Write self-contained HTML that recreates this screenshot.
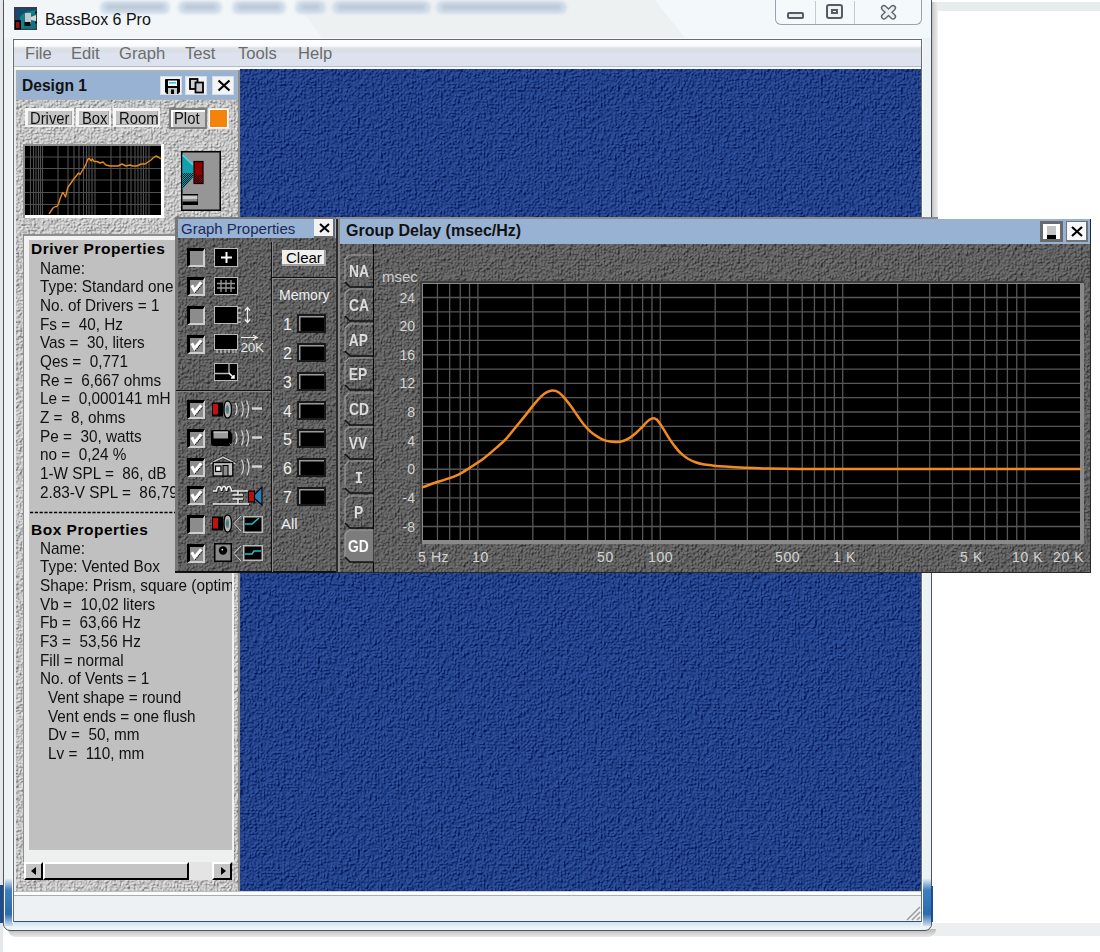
<!DOCTYPE html>
<html><head><meta charset="utf-8">
<style>
*{margin:0;padding:0;box-sizing:border-box}
html,body{width:1100px;height:952px;overflow:hidden;background:#fff;font-family:"Liberation Sans",sans-serif}
.a{position:absolute}
.t{position:absolute;white-space:nowrap;line-height:1}
svg{display:block}
</style></head><body>
<svg width="0" height="0" style="position:absolute">
<defs>
<filter id="nb" x="0" y="0" width="100%" height="100%" color-interpolation-filters="sRGB">
<feTurbulence type="turbulence" baseFrequency="0.35" numOctaves="2" seed="4" result="t"/>
<feColorMatrix in="t" type="matrix" values="0 0 0 0 0  0 0 0 0 0  0 0 0 0 0  1 0 0 0 0" result="a"/>
<feDiffuseLighting in="a" surfaceScale="2.5" diffuseConstant="1" lighting-color="#fff" result="l"><feDistantLight azimuth="225" elevation="50"/></feDiffuseLighting>
<feColorMatrix in="l" type="matrix" values="0.2 0 0 0 -0.01  0 0.26 0 0 0.065  0 0 0.32 0 0.31  0 0 0 0 1"/>
</filter>
<filter id="nl" x="0" y="0" width="100%" height="100%" color-interpolation-filters="sRGB">
<feTurbulence type="turbulence" baseFrequency="0.35" numOctaves="2" seed="7" result="t"/>
<feColorMatrix in="t" type="matrix" values="0 0 0 0 0  0 0 0 0 0  0 0 0 0 0  1 0 0 0 0" result="a"/>
<feDiffuseLighting in="a" surfaceScale="2.5" diffuseConstant="1" lighting-color="#fff" result="l"><feDistantLight azimuth="225" elevation="50"/></feDiffuseLighting>
<feColorMatrix in="l" type="matrix" values="0.45 0 0 0 0.44  0.45 0 0 0 0.44  0.45 0 0 0 0.44  0 0 0 0 1"/>
</filter>
<filter id="nd" x="0" y="0" width="100%" height="100%" color-interpolation-filters="sRGB">
<feTurbulence type="turbulence" baseFrequency="0.35" numOctaves="2" seed="9" result="t"/>
<feColorMatrix in="t" type="matrix" values="0 0 0 0 0  0 0 0 0 0  0 0 0 0 0  1 0 0 0 0" result="a"/>
<feDiffuseLighting in="a" surfaceScale="2.5" diffuseConstant="1" lighting-color="#fff" result="l"><feDistantLight azimuth="225" elevation="50"/></feDiffuseLighting>
<feColorMatrix in="l" type="matrix" values="0.3 0 0 0 0.155  0.3 0 0 0 0.155  0.3 0 0 0 0.155  0 0 0 0 1"/>
</filter>
</defs></svg>
<div class="a" style="left:0;top:0;width:1100px;height:952px;overflow:hidden">

<div class="a" style="left:936px;top:2px;width:164px;height:9px;background:#e9eced"></div>
<div class="a" style="left:930px;top:923px;width:170px;height:13px;background:#eceeef"></div>
<div class="a" style="left:0px;top:0px;width:3px;height:952px;background:#e4e8ea"></div>
<div class="a" style="left:930px;top:2px;width:8px;height:216px;background:linear-gradient(90deg,#9a9a9a,#d0d0d0 40%,#eeeeee)"></div>
<div class="a" style="left:8px;top:929px;width:928px;height:8px;border-radius:0 0 8px 8px;background:linear-gradient(#b8b8b8,#e8e8e8)"></div>
<div class="a" style="left:3px;top:-6px;width:929px;height:937px;border:1px solid #4e5458;border-radius:7px;background:#edf2f4"></div>
<div class="a" style="left:4px;top:0px;width:927px;height:38px;background:#eef1f2"></div>
<div class="a" style="left:4px;top:0px;width:320px;height:38px;background:#f2f6f8;clip-path:polygon(0 0,290px 0,318px 38px,0 38px)"></div>
<div class="a" style="left:655px;top:0px;width:276px;height:38px;background:#f3f8fa;clip-path:polygon(0 0,276px 0,276px 38px,30px 38px)"></div>
<div class="a" style="left:100px;top:0.5px;width:70px;height:13px;border-radius:6px;background:#d2dfec;filter:blur(1.8px)"></div>
<div class="a" style="left:105px;top:4px;width:60px;height:6px;border-radius:3px;background:#a8b4c2;filter:blur(2.2px);opacity:0.55"></div>
<div class="a" style="left:178px;top:0.5px;width:44px;height:13px;border-radius:6px;background:#d2dfec;filter:blur(1.8px)"></div>
<div class="a" style="left:183px;top:4px;width:34px;height:6px;border-radius:3px;background:#a8b4c2;filter:blur(2.2px);opacity:0.55"></div>
<div class="a" style="left:232px;top:0.5px;width:54px;height:13px;border-radius:6px;background:#d2dfec;filter:blur(1.8px)"></div>
<div class="a" style="left:237px;top:4px;width:44px;height:6px;border-radius:3px;background:#a8b4c2;filter:blur(2.2px);opacity:0.55"></div>
<div class="a" style="left:295px;top:0.5px;width:31px;height:13px;border-radius:6px;background:#d2dfec;filter:blur(1.8px)"></div>
<div class="a" style="left:300px;top:4px;width:21px;height:6px;border-radius:3px;background:#a8b4c2;filter:blur(2.2px);opacity:0.55"></div>
<div class="a" style="left:332px;top:0.5px;width:99px;height:13px;border-radius:6px;background:#d2dfec;filter:blur(1.8px)"></div>
<div class="a" style="left:337px;top:4px;width:89px;height:6px;border-radius:3px;background:#a8b4c2;filter:blur(2.2px);opacity:0.55"></div>
<div class="a" style="left:436px;top:0.5px;width:131px;height:13px;border-radius:6px;background:#d2dfec;filter:blur(1.8px)"></div>
<div class="a" style="left:441px;top:4px;width:121px;height:6px;border-radius:3px;background:#a8b4c2;filter:blur(2.2px);opacity:0.55"></div>
<div class="a" style="left:5px;top:878px;width:8px;height:48px;background:linear-gradient(#eef5f8,#3f7fc0 25%,#2a6ab0 75%,#cfe0ef)"></div>
<div class="a" style="left:923px;top:878px;width:8px;height:48px;background:linear-gradient(#eef5f8,#3f7fc0 25%,#2a6ab0 75%,#cfe0ef)"></div>
<div class="a" style="left:0px;top:885px;width:3px;height:38px;background:#1d4d90"></div>
<div class="a" style="left:931px;top:886px;width:2px;height:36px;background:#1d4d90"></div>
<div class="a" style="left:14px;top:922px;width:907px;height:8px;background:linear-gradient(#cfe2f0,#e8f2f8 60%,#f4f8fa)"></div>
<svg class="a" style="left:14px;top:7px" width="23" height="23">
<rect x="0" y="0" width="23" height="23" fill="#3c3c40"/>
<rect x="1.5" y="1.5" width="20" height="20" fill="#124a72"/>
<path d="M6 21.5 V10 Q8 5 21.5 3 V21.5 Z" fill="#11828c"/>
<path d="M10 21.5 V12 Q13 8 21.5 6 V21.5 Z" fill="#0e7580"/>
<rect x="11" y="6" width="6" height="11" fill="#c4c8c8"/>
<path d="M17 10 L22 8 V14 L17 13 Z" fill="#d4d8d8"/>
<rect x="10.5" y="15" width="6" height="4" fill="#050505"/>
<circle cx="22" cy="5.5" r="1" fill="#000"/><circle cx="22" cy="15.5" r="1" fill="#000"/>
<rect x="1" y="13" width="6" height="9.5" fill="#000"/>
<rect x="2" y="15" width="3.5" height="6" fill="#8e1212"/>
</svg>
<div class="t" style="left:45px;top:11.5px;font-size:16px;color:#111;">BassBox 6 Pro</div>
<div class="a" style="left:775px;top:0px;width:147px;height:25px;border:1px solid #98a3ad;border-top:none;border-radius:0 0 6px 6px;background:#f4f9fb"></div>
<div class="a" style="left:815px;top:1px;width:1px;height:23px;background:#c4ccd3"></div>
<div class="a" style="left:854px;top:1px;width:1px;height:23px;background:#c4ccd3"></div>
<div class="a" style="left:787px;top:12px;width:17px;height:7px;border:2px solid #555c63;border-radius:2px;background:#e8ecef"></div>
<div class="a" style="left:826px;top:4px;width:17px;height:15px;border:2px solid #555c63;border-radius:3px;background:#f0f3f5"></div>
<div class="a" style="left:831px;top:9px;width:7px;height:5px;border:2px solid #555c63;background:#fff"></div>
<svg class="a" style="left:878px;top:1.5px" width="21" height="20"><path d="M6 6 L15 14.5 M15 6 L6 14.5" stroke="#5d656c" stroke-width="6.2" stroke-linecap="round"/><path d="M6 6 L15 14.5 M15 6 L6 14.5" stroke="#eceff1" stroke-width="3.4" stroke-linecap="round"/></svg>
<div class="a" style="left:12px;top:38px;width:911px;height:885px;border:1px solid #fafcfc;border-bottom:none;background:transparent"></div>
<div class="a" style="left:13px;top:39px;width:909px;height:883px;border:1px solid #676d72;background:#dce3ee"></div>
<div class="a" style="left:14px;top:40px;width:907px;height:27px;background:linear-gradient(#fdfefe 0,#f9fbfc 6px,#dde2e8 8px,#d9dee5 12px,#dce3ee 13px,#dce3ee 26px)"></div>
<div class="a" style="left:14px;top:66px;width:907px;height:1px;background:#b4bcc6"></div>
<div class="a" style="left:14px;top:67px;width:907px;height:2px;background:#f6f8fb"></div>
<div class="t" style="left:25px;top:46.3px;font-size:16.6px;color:#6c6c6c;">File</div>
<div class="t" style="left:71px;top:46.3px;font-size:16.6px;color:#6c6c6c;">Edit</div>
<div class="t" style="left:119px;top:46.3px;font-size:16.6px;color:#6c6c6c;">Graph</div>
<div class="t" style="left:185px;top:46.3px;font-size:16.6px;color:#6c6c6c;">Test</div>
<div class="t" style="left:238px;top:46.3px;font-size:16.6px;color:#6c6c6c;">Tools</div>
<div class="t" style="left:298px;top:46.3px;font-size:16.6px;color:#6c6c6c;">Help</div>
<svg class="a" style="left:240px;top:69px" width="681" height="823"><rect width="681" height="823" filter="url(#nb)"/></svg>
<div class="a" style="left:14px;top:891px;width:907px;height:31px;background:#eef1f3"></div>
<div class="a" style="left:14px;top:891px;width:907px;height:1px;background:#c9cdd0"></div>
<div class="a" style="left:14px;top:892px;width:907px;height:3px;background:#fbfcfc"></div>
<div class="a" style="left:14px;top:895px;width:907px;height:1px;background:#a9adb0"></div>
<div class="a" style="left:14px;top:921px;width:907px;height:1px;background:#3d4f60"></div>
<svg class="a" style="left:902px;top:902px" width="20" height="19"><path d="M18 5 L5 18 M18 10 L10 18 M18 15 L15 18" stroke="#9a9fa3" stroke-width="1.6"/></svg>
<div class="a" style="left:14px;top:69px;width:226px;height:823px;background:#bdbdbd"></div>
<svg class="a" style="left:16px;top:69px" width="223" height="822"><rect width="223" height="822" filter="url(#nl)"/></svg>
<div class="a" style="left:14px;top:69px;width:2px;height:822px;background:#e8ecee"></div>
<div class="a" style="left:238px;top:69px;width:2px;height:822px;background:#8c8c8c"></div>
<div class="a" style="left:14px;top:67px;width:226px;height:3px;background:#f4f6f8"></div>
<div class="a" style="left:16px;top:70px;width:222px;height:30px;background:#a9b3bd"></div>
<div class="a" style="left:18px;top:72px;width:219px;height:27px;background:#98b2d3"></div>
<div class="t" style="left:22px;top:77.5px;font-size:15.6px;color:#111;font-weight:bold">Design 1</div>
<div class="a" style="left:160px;top:76px;width:22px;height:19px;background:#f2f3f4;border:1px solid #d8dde2"></div>
<div class="a" style="left:185px;top:76px;width:22px;height:19px;background:#f2f3f4;border:1px solid #d8dde2"></div>
<div class="a" style="left:212px;top:76px;width:22px;height:19px;background:#f2f3f4;border:1px solid #d8dde2"></div>
<svg class="a" style="left:165px;top:79px" width="15" height="15"><path d="M0 1 Q0 0 1 0 H14 Q15 0 15 1 V13 L13 15 H2 L0 13 Z" fill="#000"/><rect x="3" y="1.5" width="9" height="5.5" fill="#f4f4f4"/><rect x="4" y="3" width="7" height="1.6" fill="#30c8d0"/><rect x="3" y="9" width="9" height="6" fill="#c8c8c8"/><rect x="6" y="10.5" width="3" height="4.5" fill="#000"/></svg>
<svg class="a" style="left:189px;top:78px" width="16" height="16"><rect x="1" y="1" width="7.5" height="10" fill="#d0d0d0" stroke="#000" stroke-width="1.8"/><rect x="6.5" y="4.5" width="7.5" height="10" fill="#c8c8c8" stroke="#000" stroke-width="1.8"/></svg>
<svg class="a" style="left:217px;top:79px" width="14" height="13"><path d="M1.5 1.5 L12.5 11.5 M12.5 1.5 L1.5 11.5" stroke="#000" stroke-width="2.2"/></svg>
<div class="a" style="left:25px;top:108px;width:49px;height:19px;background:#c4c4c4;border-top:3px solid #f6f6f6;border-left:3px solid #f6f6f6;border-right:2px solid #f0f0f0;border-bottom:2px solid #f0f0f0;box-shadow:inset -1px -1px 0 #a4a4a4"></div>
<div class="t" style="left:30px;top:110.3px;font-size:17px;color:#111;transform:scaleX(0.87);transform-origin:0 0">Driver</div>
<div class="a" style="left:76px;top:108px;width:35px;height:19px;background:#c4c4c4;border-top:3px solid #f6f6f6;border-left:3px solid #f6f6f6;border-right:2px solid #f0f0f0;border-bottom:2px solid #f0f0f0;box-shadow:inset -1px -1px 0 #a4a4a4"></div>
<div class="t" style="left:82px;top:110.3px;font-size:17px;color:#111;transform:scaleX(0.87);transform-origin:0 0">Box</div>
<div class="a" style="left:113px;top:108px;width:47px;height:19px;background:#c4c4c4;border-top:3px solid #f6f6f6;border-left:3px solid #f6f6f6;border-right:2px solid #f0f0f0;border-bottom:2px solid #f0f0f0;box-shadow:inset -1px -1px 0 #a4a4a4"></div>
<div class="t" style="left:118.5px;top:110.3px;font-size:17px;color:#111;transform:scaleX(0.87);transform-origin:0 0">Room</div>
<div class="a" style="left:169px;top:108px;width:38px;height:21px;background:#c4c4c4;border:2px solid #7d7d7d;border-top-color:#7d7d7d;border-left-color:#7d7d7d;box-shadow:inset 2px 2px 0 #fff"></div>
<div class="t" style="left:174px;top:110.3px;font-size:17px;color:#111;transform:scaleX(0.87);transform-origin:0 0">Plot</div>
<div class="a" style="left:208px;top:108px;width:21px;height:21px;background:#fff;border:1px solid #e8e8e8"></div>
<div class="a" style="left:210px;top:110px;width:17px;height:17px;background:#f4830c"></div>
<svg class="a" style="left:23px;top:144px" width="141" height="74">
<rect x="0" y="0" width="141" height="74" fill="#8e8e8e"/>
<rect x="2" y="71" width="139" height="3" fill="#fff"/><rect x="138" y="0" width="3" height="74" fill="#fff"/>
<rect x="2" y="2" width="136" height="69" fill="#000"/>
<line x1="7.5" y1="2" x2="7.5" y2="71" stroke="#505050" stroke-width="1.1"/>
<line x1="10.5" y1="2" x2="10.5" y2="71" stroke="#505050" stroke-width="1.1"/>
<line x1="13" y1="2" x2="13" y2="71" stroke="#505050" stroke-width="1.1"/>
<line x1="15.5" y1="2" x2="15.5" y2="71" stroke="#505050" stroke-width="1.1"/>
<line x1="17.5" y1="2" x2="17.5" y2="71" stroke="#505050" stroke-width="1.1"/>
<line x1="19.5" y1="2" x2="19.5" y2="71" stroke="#505050" stroke-width="1.1"/>
<line x1="35" y1="2" x2="35" y2="71" stroke="#505050" stroke-width="1.1"/>
<line x1="45" y1="2" x2="45" y2="71" stroke="#505050" stroke-width="1.1"/>
<line x1="51" y1="2" x2="51" y2="71" stroke="#505050" stroke-width="1.1"/>
<line x1="56" y1="2" x2="56" y2="71" stroke="#505050" stroke-width="1.1"/>
<line x1="60.5" y1="2" x2="60.5" y2="71" stroke="#505050" stroke-width="1.1"/>
<line x1="63.5" y1="2" x2="63.5" y2="71" stroke="#505050" stroke-width="1.1"/>
<line x1="66" y1="2" x2="66" y2="71" stroke="#505050" stroke-width="1.1"/>
<line x1="69" y1="2" x2="69" y2="71" stroke="#505050" stroke-width="1.1"/>
<line x1="72" y1="2" x2="72" y2="71" stroke="#505050" stroke-width="1.1"/>
<line x1="88" y1="2" x2="88" y2="71" stroke="#505050" stroke-width="1.1"/>
<line x1="97" y1="2" x2="97" y2="71" stroke="#505050" stroke-width="1.1"/>
<line x1="104" y1="2" x2="104" y2="71" stroke="#505050" stroke-width="1.1"/>
<line x1="108" y1="2" x2="108" y2="71" stroke="#505050" stroke-width="1.1"/>
<line x1="112" y1="2" x2="112" y2="71" stroke="#505050" stroke-width="1.1"/>
<line x1="115" y1="2" x2="115" y2="71" stroke="#505050" stroke-width="1.1"/>
<line x1="118" y1="2" x2="118" y2="71" stroke="#505050" stroke-width="1.1"/>
<line x1="120.5" y1="2" x2="120.5" y2="71" stroke="#505050" stroke-width="1.1"/>
<line x1="123" y1="2" x2="123" y2="71" stroke="#505050" stroke-width="1.1"/>
<line x1="126" y1="2" x2="126" y2="71" stroke="#505050" stroke-width="1.1"/>
<line x1="2" y1="13" x2="138" y2="13" stroke="#505050" stroke-width="1.1"/>
<line x1="2" y1="24.5" x2="138" y2="24.5" stroke="#505050" stroke-width="1.1"/>
<line x1="2" y1="36" x2="138" y2="36" stroke="#505050" stroke-width="1.1"/>
<line x1="2" y1="48.5" x2="138" y2="48.5" stroke="#505050" stroke-width="1.1"/>
<line x1="2" y1="60.5" x2="138" y2="60.5" stroke="#505050" stroke-width="1.1"/>
<path d="M26,70 L28,67 L30,64 L32.5,62.5 L34,62.5 L35.5,60 L37,55 L39,50 L40,48.5 L41.5,51 L42.5,53 L43.5,49 L45,43 L48,39 L50,36 L52,33.5 L54,31 L55.5,29 L57,30.5 L58.5,28 L61,24 L63,20 L65,15 L66.5,14.5 L68,17 L69.5,15 L71,17.5 L74,17.5 L77,19 L80,18 L83,21 L87,22 L91,22 L95,22 L99,20 L103,22 L107,21 L110,22 L114,22 L118,20 L122,20 L125,18 L128,16 L130,14 L133,12 L135,13 L138,15" fill="none" stroke="#e88a22" stroke-width="1.4" stroke-linejoin="round"/>
</svg>
<svg class="a" style="left:181px;top:151px" width="40" height="60">
<defs><pattern id="dith" width="2" height="2" patternUnits="userSpaceOnUse"><rect width="2" height="2" fill="#0b1a20"/><rect width="1" height="1" fill="#1590a0"/><rect x="1" y="1" width="1" height="1" fill="#1590a0"/></pattern>
<pattern id="dithr" width="2" height="2" patternUnits="userSpaceOnUse"><rect width="2" height="2" fill="#200404"/><rect width="1" height="1" fill="#8a0000"/><rect x="1" y="1" width="1" height="1" fill="#8a0000"/></pattern></defs>
<rect x="0.75" y="0.75" width="38.5" height="58.5" fill="#969696" stroke="#000" stroke-width="1.5"/>
<path d="M1.5 4 L12 14 L12 26 L1.5 38 Z" fill="#12a0ac"/>
<path d="M1.5 22 L12 22 L12 26 L1.5 38 Z" fill="url(#dith)"/>
<path d="M1.5 4 L12 14" stroke="#40e0f0" stroke-width="1.3"/>
<rect x="13" y="10.5" width="9" height="22" fill="#8c0000" stroke="#000" stroke-width="1.2"/>
<rect x="13.6" y="24" width="7.8" height="8" fill="url(#dithr)"/>
<rect x="1.5" y="43" width="15.5" height="11" fill="#000"/>
<rect x="1.5" y="44.5" width="15" height="3.5" fill="#c8c8c8"/>
<rect x="1.5" y="48" width="15" height="2.5" fill="#8a8a8a"/>
</svg>
<div class="a" style="left:23px;top:234px;width:211px;height:628px;background:#8e8e8e"></div>
<div class="a" style="left:24px;top:236px;width:210px;height:626px;background:#f2f2f2"></div>
<div class="a" style="left:29px;top:240px;width:203px;height:610px;background:#c0c0c0"></div>
<div class="a" style="left:24px;top:850px;width:208px;height:12px;background:#eef0f0"></div>
<div class="a" style="left:29px;top:240px;width:203px;height:610px;overflow:hidden">
<div class="t" style="left:2px;top:0.8px;font-size:15.5px;font-weight:bold;letter-spacing:0.5px;color:#000">Driver Properties</div>
<div class="t" style="left:10.5px;top:19.6px;font-size:17px;transform:scaleX(0.9);transform-origin:0 0;color:#111">Name:</div>
<div class="t" style="left:10.5px;top:38.3px;font-size:17px;transform:scaleX(0.9);transform-origin:0 0;color:#111">Type: Standard one</div>
<div class="t" style="left:10.5px;top:56.9px;font-size:17px;transform:scaleX(0.9);transform-origin:0 0;color:#111">No. of Drivers = 1</div>
<div class="t" style="left:10.5px;top:75.6px;font-size:17px;transform:scaleX(0.9);transform-origin:0 0;color:#111">Fs =&nbsp; 40, Hz</div>
<div class="t" style="left:10.5px;top:94.3px;font-size:17px;transform:scaleX(0.9);transform-origin:0 0;color:#111">Vas =&nbsp; 30, liters</div>
<div class="t" style="left:10.5px;top:113.0px;font-size:17px;transform:scaleX(0.9);transform-origin:0 0;color:#111">Qes =&nbsp; 0,771</div>
<div class="t" style="left:10.5px;top:131.6px;font-size:17px;transform:scaleX(0.9);transform-origin:0 0;color:#111">Re =&nbsp; 6,667 ohms</div>
<div class="t" style="left:10.5px;top:150.3px;font-size:17px;transform:scaleX(0.9);transform-origin:0 0;color:#111">Le =&nbsp; 0,000141 mH</div>
<div class="t" style="left:10.5px;top:169.0px;font-size:17px;transform:scaleX(0.9);transform-origin:0 0;color:#111">Z =&nbsp; 8, ohms</div>
<div class="t" style="left:10.5px;top:187.6px;font-size:17px;transform:scaleX(0.9);transform-origin:0 0;color:#111">Pe =&nbsp; 30, watts</div>
<div class="t" style="left:10.5px;top:206.3px;font-size:17px;transform:scaleX(0.9);transform-origin:0 0;color:#111">no =&nbsp; 0,24 %</div>
<div class="t" style="left:10.5px;top:225.0px;font-size:17px;transform:scaleX(0.9);transform-origin:0 0;color:#111">1-W SPL =&nbsp; 86, dB</div>
<div class="t" style="left:10.5px;top:243.6px;font-size:17px;transform:scaleX(0.9);transform-origin:0 0;color:#111">2.83-V SPL =&nbsp; 86,79</div>
<div class="t" style="left:2px;top:281.5px;font-size:15.5px;font-weight:bold;letter-spacing:0.5px;color:#000">Box Properties</div>
<div class="t" style="left:10.5px;top:299.6px;font-size:17px;transform:scaleX(0.9);transform-origin:0 0;color:#111">Name:</div>
<div class="t" style="left:10.5px;top:318.3px;font-size:17px;transform:scaleX(0.9);transform-origin:0 0;color:#111">Type: Vented Box</div>
<div class="t" style="left:10.5px;top:336.9px;font-size:17px;transform:scaleX(0.9);transform-origin:0 0;color:#111">Shape: Prism, square (optimu</div>
<div class="t" style="left:10.5px;top:355.6px;font-size:17px;transform:scaleX(0.9);transform-origin:0 0;color:#111">Vb =&nbsp; 10,02 liters</div>
<div class="t" style="left:10.5px;top:374.3px;font-size:17px;transform:scaleX(0.9);transform-origin:0 0;color:#111">Fb =&nbsp; 63,66 Hz</div>
<div class="t" style="left:10.5px;top:393.0px;font-size:17px;transform:scaleX(0.9);transform-origin:0 0;color:#111">F3 =&nbsp; 53,56 Hz</div>
<div class="t" style="left:10.5px;top:411.6px;font-size:17px;transform:scaleX(0.9);transform-origin:0 0;color:#111">Fill = normal</div>
<div class="t" style="left:10.5px;top:430.3px;font-size:17px;transform:scaleX(0.9);transform-origin:0 0;color:#111">No. of Vents = 1</div>
<div class="t" style="left:18.5px;top:449.0px;font-size:17px;transform:scaleX(0.9);transform-origin:0 0;color:#111">Vent shape = round</div>
<div class="t" style="left:18.5px;top:467.6px;font-size:17px;transform:scaleX(0.9);transform-origin:0 0;color:#111">Vent ends = one flush</div>
<div class="t" style="left:18.5px;top:486.3px;font-size:17px;transform:scaleX(0.9);transform-origin:0 0;color:#111">Dv =&nbsp; 50, mm</div>
<div class="t" style="left:18.5px;top:505.0px;font-size:17px;transform:scaleX(0.9);transform-origin:0 0;color:#111">Lv =&nbsp; 110, mm</div>
</div>
<svg class="a" style="left:29px;top:511px" width="203" height="3"><line x1="1" y1="1.5" x2="203" y2="1.5" stroke="#000" stroke-width="1.4" stroke-dasharray="3.2 1.6"/></svg>
<div class="a" style="left:24px;top:862px;width:208px;height:18px;background:#e4e4e4"></div>
<div class="a" style="left:24px;top:862px;width:19px;height:18px;background:#c4c4c4;border-top:2px solid #fff;border-left:2px solid #fff;border-right:2px solid #000;border-bottom:2px solid #000"></div>
<svg class="a" style="left:30px;top:866px" width="8" height="10"><path d="M1 5 L6 1 L6 9 Z" fill="#000"/></svg>
<div class="a" style="left:43px;top:862px;width:146px;height:18px;background:#c4c4c4;border-top:2px solid #fff;border-left:2px solid #fff;border-right:2px solid #000;border-bottom:2px solid #000"></div>
<div class="a" style="left:212px;top:862px;width:20px;height:18px;background:#c4c4c4;border-top:2px solid #fff;border-left:2px solid #fff;border-right:2px solid #000;border-bottom:2px solid #000"></div>
<svg class="a" style="left:219px;top:866px" width="8" height="10"><path d="M2 1 L7 5 L2 9 Z" fill="#000"/></svg>
<div class="a" style="left:175px;top:217px;width:162px;height:356px;background:#777"></div>
<svg class="a" style="left:178px;top:238px" width="158" height="334"><rect width="158" height="334" filter="url(#nd)"/></svg>
<div class="a" style="left:178px;top:219px;width:158px;height:19px;background:#98b2d3"></div>
<div class="t" style="left:181px;top:221px;font-size:15px;color:#1a2a55;">Graph Properties</div>
<div class="a" style="left:314px;top:219px;width:21px;height:19px;background:#f2f2f2;border-right:2px solid #6a6a6a;border-bottom:2px solid #6a6a6a"></div>
<svg class="a" style="left:318px;top:222px" width="13" height="12"><path d="M2 2 L11 10 M11 2 L2 10" stroke="#000" stroke-width="2"/></svg>
<div class="a" style="left:336px;top:217px;width:1px;height:356px;background:#111"></div>
<div class="a" style="left:175px;top:571px;width:162px;height:2px;background:#111"></div>
<div class="a" style="left:271px;top:242px;width:1px;height:330px;background:#111"></div>
<div class="a" style="left:272px;top:242px;width:1px;height:330px;background:#888"></div>
<div class="a" style="left:176px;top:390px;width:95px;height:1px;background:#111"></div>
<div class="a" style="left:176px;top:391px;width:95px;height:1px;background:#888"></div>
<div class="a" style="left:272px;top:277px;width:64px;height:1px;background:#111"></div>
<div class="a" style="left:272px;top:278px;width:64px;height:1px;background:#888"></div>
<div class="a" style="left:187px;top:248px;width:18px;height:19px;background:#8c8c8c;border-top:3px solid #000;border-left:3px solid #000;border-right:2px solid #cfcfcf;border-bottom:2px solid #cfcfcf"></div>
<div class="a" style="left:187px;top:277px;width:18px;height:19px;background:#8c8c8c;border-top:3px solid #000;border-left:3px solid #000;border-right:2px solid #cfcfcf;border-bottom:2px solid #cfcfcf"></div>
<svg class="a" style="left:190px;top:280px" width="14" height="14"><path d="M5.2 12.6 L12.2 4.2" fill="none" stroke="#000" stroke-width="1.3" stroke-dasharray="1.2 0.9"/><path d="M1.8 5.2 L4.6 10.4 L11.2 2.2" fill="none" stroke="#fff" stroke-width="3" stroke-linejoin="miter"/></svg>
<div class="a" style="left:187px;top:306px;width:18px;height:19px;background:#8c8c8c;border-top:3px solid #000;border-left:3px solid #000;border-right:2px solid #cfcfcf;border-bottom:2px solid #cfcfcf"></div>
<div class="a" style="left:187px;top:334.5px;width:18px;height:19px;background:#8c8c8c;border-top:3px solid #000;border-left:3px solid #000;border-right:2px solid #cfcfcf;border-bottom:2px solid #cfcfcf"></div>
<svg class="a" style="left:190px;top:337.5px" width="14" height="14"><path d="M5.2 12.6 L12.2 4.2" fill="none" stroke="#000" stroke-width="1.3" stroke-dasharray="1.2 0.9"/><path d="M1.8 5.2 L4.6 10.4 L11.2 2.2" fill="none" stroke="#fff" stroke-width="3" stroke-linejoin="miter"/></svg>
<div class="a" style="left:187px;top:400px;width:18px;height:19px;background:#8c8c8c;border-top:3px solid #000;border-left:3px solid #000;border-right:2px solid #cfcfcf;border-bottom:2px solid #cfcfcf"></div>
<svg class="a" style="left:190px;top:403px" width="14" height="14"><path d="M5.2 12.6 L12.2 4.2" fill="none" stroke="#000" stroke-width="1.3" stroke-dasharray="1.2 0.9"/><path d="M1.8 5.2 L4.6 10.4 L11.2 2.2" fill="none" stroke="#fff" stroke-width="3" stroke-linejoin="miter"/></svg>
<div class="a" style="left:187px;top:429px;width:18px;height:19px;background:#8c8c8c;border-top:3px solid #000;border-left:3px solid #000;border-right:2px solid #cfcfcf;border-bottom:2px solid #cfcfcf"></div>
<svg class="a" style="left:190px;top:432px" width="14" height="14"><path d="M5.2 12.6 L12.2 4.2" fill="none" stroke="#000" stroke-width="1.3" stroke-dasharray="1.2 0.9"/><path d="M1.8 5.2 L4.6 10.4 L11.2 2.2" fill="none" stroke="#fff" stroke-width="3" stroke-linejoin="miter"/></svg>
<div class="a" style="left:187px;top:458px;width:18px;height:19px;background:#8c8c8c;border-top:3px solid #000;border-left:3px solid #000;border-right:2px solid #cfcfcf;border-bottom:2px solid #cfcfcf"></div>
<svg class="a" style="left:190px;top:461px" width="14" height="14"><path d="M5.2 12.6 L12.2 4.2" fill="none" stroke="#000" stroke-width="1.3" stroke-dasharray="1.2 0.9"/><path d="M1.8 5.2 L4.6 10.4 L11.2 2.2" fill="none" stroke="#fff" stroke-width="3" stroke-linejoin="miter"/></svg>
<div class="a" style="left:187px;top:486px;width:18px;height:19px;background:#8c8c8c;border-top:3px solid #000;border-left:3px solid #000;border-right:2px solid #cfcfcf;border-bottom:2px solid #cfcfcf"></div>
<svg class="a" style="left:190px;top:489px" width="14" height="14"><path d="M5.2 12.6 L12.2 4.2" fill="none" stroke="#000" stroke-width="1.3" stroke-dasharray="1.2 0.9"/><path d="M1.8 5.2 L4.6 10.4 L11.2 2.2" fill="none" stroke="#fff" stroke-width="3" stroke-linejoin="miter"/></svg>
<div class="a" style="left:187px;top:515px;width:18px;height:19px;background:#8c8c8c;border-top:3px solid #000;border-left:3px solid #000;border-right:2px solid #cfcfcf;border-bottom:2px solid #cfcfcf"></div>
<div class="a" style="left:187px;top:544px;width:18px;height:19px;background:#8c8c8c;border-top:3px solid #000;border-left:3px solid #000;border-right:2px solid #cfcfcf;border-bottom:2px solid #cfcfcf"></div>
<svg class="a" style="left:190px;top:547px" width="14" height="14"><path d="M5.2 12.6 L12.2 4.2" fill="none" stroke="#000" stroke-width="1.3" stroke-dasharray="1.2 0.9"/><path d="M1.8 5.2 L4.6 10.4 L11.2 2.2" fill="none" stroke="#fff" stroke-width="3" stroke-linejoin="miter"/></svg>
<div class="a" style="left:214px;top:248px;width:24px;height:19px;background:#000;border:1.5px solid #b8b8b8"></div>
<svg class="a" style="left:220px;top:251px" width="13" height="13"><path d="M6.5 1 V12 M1 6.5 H12" stroke="#fff" stroke-width="2"/></svg>
<div class="a" style="left:214px;top:277px;width:24px;height:18px;background:#000;border:1.5px solid #b8b8b8"></div>
<svg class="a" style="left:214px;top:277px" width="24" height="18"><path d="M7 3 V15 M12 3 V15 M17 3 V15 M3 6.5 H21 M3 11 H21" stroke="#9a9a9a" stroke-width="1.3"/></svg>
<div class="a" style="left:214px;top:306px;width:24px;height:18px;background:#000;border:1.5px solid #b8b8b8"></div>
<svg class="a" style="left:238px;top:306px" width="16" height="18"><path d="M0 2 H3 M0 7 H3 M0 12 H3 M0 16 H3" stroke="#ddd" stroke-width="1.2"/><path d="M9.5 2 V16 M7 4.5 L9.5 1.5 L12 4.5 M7 13.5 L9.5 16.5 L12 13.5" fill="none" stroke="#eee" stroke-width="1.2"/></svg>
<div class="a" style="left:214px;top:334px;width:24px;height:16px;background:#000;border:1.5px solid #b8b8b8"></div>
<svg class="a" style="left:214px;top:349px" width="24" height="4"><path d="M3 0 V4 M7 0 V4 M11 0 V4 M15 0 V4 M19 0 V4 M22 0 V4" stroke="#ddd" stroke-width="1"/></svg>
<svg class="a" style="left:241px;top:334px" width="18" height="7"><path d="M0 3.5 H16 M12 1 L16 3.5 L12 6" fill="none" stroke="#eee" stroke-width="1.2"/></svg>
<div class="t" style="left:240.5px;top:341px;font-size:13.5px;color:#e8e8e8;letter-spacing:-0.3px">20K</div>
<div class="a" style="left:214px;top:363px;width:24px;height:18px;background:#000;border:1.5px solid #b8b8b8"></div>
<svg class="a" style="left:214px;top:363px" width="24" height="18"><path d="M1 10.5 H16 M15 1 V10.5" stroke="#bbb" stroke-width="1.3"/><path d="M15 10 L20 15 M17 15 H20 V12" fill="none" stroke="#fff" stroke-width="1.5"/></svg>
<svg class="a" style="left:211px;top:400px" width="22" height="19">
<rect x="1" y="2.5" width="11" height="14" fill="#000"/>
<rect x="2" y="4" width="5" height="10.5" fill="#c41010"/>
<path d="M13 9.5 Q13 1 16.5 0.8 Q20.5 1 20.5 9.5 Q20.5 18 16.5 18.2 Q13 18 13 9.5 Z" fill="#b8b8b8" stroke="#000" stroke-width="1.3"/>
<path d="M14.5 9.5 Q15 5 16.5 5 Q18 5 18 9.5 Q18 14 16.5 14 Q15 14 14.5 9.5 Z" fill="#707878"/>
<ellipse cx="16.5" cy="9.5" rx="1.2" ry="2" fill="#1a8aa0"/>
</svg>
<svg class="a" style="left:232px;top:400px" width="32" height="18"><path d="M3.5 3 Q6.5 9 3.5 15 M9.5 1.5 Q13 9 9.5 16.5 M14.5 0.5 Q18.5 9 14.5 17.5" fill="none" stroke="#d4d4d4" stroke-width="1.2"/><path d="M20 8.5 H30" stroke="#d8d8d8" stroke-width="2.4"/></svg>
<svg class="a" style="left:210px;top:429px" width="24" height="19"><path d="M3 1 H17 Q22.5 1 22.5 9 Q22.5 17 17 17 H4 Q1 17 1 14 V4 Q1 1 3 1 Z" fill="#000"/><rect x="3.5" y="2.5" width="14.5" height="7" fill="#9c9c9c"/><rect x="3.5" y="2.5" width="14.5" height="1.2" fill="#cfcfcf"/><path d="M19.5 14.5 L21 16" stroke="#888" stroke-width="1"/></svg>
<svg class="a" style="left:232px;top:429px" width="32" height="18"><path d="M3.5 3 Q6.5 9 3.5 15 M9.5 1.5 Q13 9 9.5 16.5 M14.5 0.5 Q18.5 9 14.5 17.5" fill="none" stroke="#d4d4d4" stroke-width="1.2"/><path d="M20 8.5 H30" stroke="#d8d8d8" stroke-width="2.4"/></svg>
<svg class="a" style="left:209px;top:456px" width="28" height="21"><path d="M1.5 8 Q5 5.5 8 4 L14 1.2 L20 4 Q23 5.5 26.5 8" fill="none" stroke="#1a1a1a" stroke-width="3"/><path d="M1.5 8 Q5 5.5 8 4 L14 1.2 L20 4 Q23 5.5 26.5 8" fill="none" stroke="#c4c4c4" stroke-width="1.6"/><rect x="4.2" y="6.5" width="19.6" height="13.5" fill="#c0c0c0" stroke="#000" stroke-width="1.3"/><rect x="6.5" y="10" width="5.5" height="5.5" fill="#e8e8e8" stroke="#000" stroke-width="1.2"/><rect x="8.3" y="11.8" width="2" height="2" fill="#fff"/><rect x="14" y="9.5" width="5" height="10.5" fill="#8c8c8c" stroke="#000" stroke-width="1.1"/></svg>
<svg class="a" style="left:238px;top:458px" width="26" height="18"><path d="M3.5 1.5 Q7.5 9 3.5 16.5 M9 0.5 Q13 9 9 17.5" fill="none" stroke="#d4d4d4" stroke-width="1.2"/><path d="M14 8.5 H24" stroke="#d8d8d8" stroke-width="2.4"/></svg>
<svg class="a" style="left:211px;top:485px" width="53" height="21">
<g transform="translate(0.8,0.8)" stroke="#111" fill="none" stroke-width="1.6">
<path d="M2 6 H5.5 Q6 1.5 8 1.5 Q10 1.5 10.5 6 Q11 1.5 13 1.5 Q15 1.5 15.5 6 Q16 1.5 18 1.5 Q20 1.5 20.5 6 H38"/>
<path d="M27 6 V9.5 M21.5 10 H32 M21.5 14 H32 M27 14.5 V18.5 M2 19 H38"/></g>
<g stroke="#f2f2f2" fill="none" stroke-width="1.5">
<path d="M2 6 H5.5 Q6 1.5 8 1.5 Q10 1.5 10.5 6 Q11 1.5 13 1.5 Q15 1.5 15.5 6 Q16 1.5 18 1.5 Q20 1.5 20.5 6 H38"/>
<path d="M27 6 V9.5 M21.5 10 H32 M21.5 14 H32 M27 14.5 V18.5 M2 19 H38"/></g>
<rect x="37.5" y="6" width="6" height="11" fill="#b81010" stroke="#000" stroke-width="1.1"/>
<path d="M43.5 9.5 L51 2 V20 L43.5 13.5 Z" fill="#2a7ab2" stroke="#000" stroke-width="1.1"/>
</svg>
<svg class="a" style="left:211px;top:514px" width="22" height="19">
<rect x="1" y="2.5" width="11" height="14" fill="#000"/>
<rect x="2" y="4" width="5" height="10.5" fill="#c41010"/>
<path d="M13 9.5 Q13 1 16.5 0.8 Q20.5 1 20.5 9.5 Q20.5 18 16.5 18.2 Q13 18 13 9.5 Z" fill="#b8b8b8" stroke="#000" stroke-width="1.3"/>
<path d="M14.5 9.5 Q15 5 16.5 5 Q18 5 18 9.5 Q18 14 16.5 14 Q15 14 14.5 9.5 Z" fill="#707878"/>
<ellipse cx="16.5" cy="9.5" rx="1.2" ry="2" fill="#1a8aa0"/>
</svg>
<svg class="a" style="left:233px;top:515px" width="9" height="17"><path d="M8 1 L1 8.5 L8 16" fill="none" stroke="#ccc" stroke-width="1"/></svg>
<svg class="a" style="left:243px;top:516px" width="20" height="17"><rect x="0.75" y="0.75" width="18.5" height="15.5" fill="#000" stroke="#bbb" stroke-width="1.5"/><path d="M2 8 H9 L16 2" fill="none" stroke="#20c0d0" stroke-width="1.5"/></svg>
<svg class="a" style="left:214px;top:543px" width="18" height="19"><rect x="0.75" y="0.75" width="16.5" height="17.5" fill="#8a8a8a" stroke="#000" stroke-width="1.5"/><circle cx="9" cy="7.5" r="4.2" fill="#000"/><circle cx="8.3" cy="6.6" r="0.9" fill="#fff"/></svg>
<svg class="a" style="left:233px;top:545px" width="9" height="17"><path d="M8 1 L1 8.5 L8 16" fill="none" stroke="#ccc" stroke-width="1"/></svg>
<svg class="a" style="left:243px;top:545px" width="20" height="16"><rect x="0.75" y="0.75" width="18.5" height="14.5" fill="#000" stroke="#bbb" stroke-width="1.5"/><path d="M2 9 H9 L11 6 H18" fill="none" stroke="#20c0d0" stroke-width="1.5"/></svg>
<div class="a" style="left:282px;top:250px;width:44px;height:16px;background:#f0f0f0;border-right:2px solid #a0a0a0;border-bottom:2px solid #a0a0a0"></div>
<div class="t" style="left:286px;top:250px;font-size:15px;color:#000;">Clear</div>
<div class="t" style="left:279px;top:288px;font-size:14px;color:#f0f0f0;">Memory</div>
<div class="t" style="left:283px;top:317px;font-size:16px;color:#eee;">1</div>
<div class="a" style="left:297px;top:314px;width:29px;height:19px;background:#000;border:2px solid #1a1a1a;box-shadow:inset 1.5px 1.5px 0 #9a9a9a"></div>
<div class="t" style="left:283px;top:346px;font-size:16px;color:#eee;">2</div>
<div class="a" style="left:297px;top:343px;width:29px;height:19px;background:#000;border:2px solid #1a1a1a;box-shadow:inset 1.5px 1.5px 0 #9a9a9a"></div>
<div class="t" style="left:283px;top:375px;font-size:16px;color:#eee;">3</div>
<div class="a" style="left:297px;top:372px;width:29px;height:19px;background:#000;border:2px solid #1a1a1a;box-shadow:inset 1.5px 1.5px 0 #9a9a9a"></div>
<div class="t" style="left:283px;top:403.5px;font-size:16px;color:#eee;">4</div>
<div class="a" style="left:297px;top:400.5px;width:29px;height:19px;background:#000;border:2px solid #1a1a1a;box-shadow:inset 1.5px 1.5px 0 #9a9a9a"></div>
<div class="t" style="left:283px;top:432px;font-size:16px;color:#eee;">5</div>
<div class="a" style="left:297px;top:429px;width:29px;height:19px;background:#000;border:2px solid #1a1a1a;box-shadow:inset 1.5px 1.5px 0 #9a9a9a"></div>
<div class="t" style="left:283px;top:461px;font-size:16px;color:#eee;">6</div>
<div class="a" style="left:297px;top:458px;width:29px;height:19px;background:#000;border:2px solid #1a1a1a;box-shadow:inset 1.5px 1.5px 0 #9a9a9a"></div>
<div class="t" style="left:283px;top:490px;font-size:16px;color:#eee;">7</div>
<div class="a" style="left:297px;top:487px;width:29px;height:19px;background:#000;border:2px solid #1a1a1a;box-shadow:inset 1.5px 1.5px 0 #9a9a9a"></div>
<div class="t" style="left:281px;top:516px;font-size:15px;color:#eee;">All</div>
<div class="a" style="left:336px;top:218px;width:755px;height:355px;background:#2a2a2a"></div>
<div class="a" style="left:336px;top:217px;width:602px;height:2px;background:#8a8a8a"></div>
<div class="a" style="left:938px;top:217px;width:153px;height:2px;background:#fff"></div>
<div class="a" style="left:338px;top:219px;width:752px;height:353px;background:#888"></div>
<svg class="a" style="left:340px;top:244px" width="750" height="328"><rect width="750" height="328" filter="url(#nd)"/></svg>
<div class="a" style="left:340px;top:219px;width:750px;height:25px;background:#98b2d3"></div>
<div class="t" style="left:346px;top:223px;font-size:16px;color:#111;font-weight:bold">Group Delay (msec/Hz)</div>
<div class="a" style="left:1040px;top:221px;width:23px;height:21px;background:#fff;border:3px solid #6a6a6a"></div>
<div class="a" style="left:1047px;top:226px;width:9px;height:12px;background:#c4c4c4"></div>
<div class="a" style="left:1047px;top:235px;width:9px;height:3.5px;background:#000"></div>
<div class="a" style="left:1066px;top:221px;width:22px;height:21px;background:#f8f8f8;border:1.5px solid #6c747c;border-right-width:2px;border-bottom-width:2px"></div>
<svg class="a" style="left:1070px;top:225px" width="14" height="13"><path d="M2 2 L12 11 M12 2 L2 11" stroke="#000" stroke-width="2.2"/></svg>
<div class="a" style="left:373px;top:244px;width:1px;height:328px;background:#000"></div>
<svg class="a" style="left:343px;top:254.0px" width="31" height="35"><path d="M30.5 1 H6 L2 5 V28 L7 33 H30.5" fill="none" stroke="none"/><path d="M30.5 1 H6 L2 5 V28" fill="none" stroke="#9c9c9c" stroke-width="1.2"/><path d="M2 28 L7 33 H30.5" fill="none" stroke="#111" stroke-width="1.5"/></svg>
<div class="t" style="left:318.5px;width:80px;text-align:center;top:263.0px;font-size:16.5px;font-weight:bold;color:#dcdcdc"><span style="display:inline-block;transform:scaleX(0.84);">NA</span></div>
<svg class="a" style="left:343px;top:288.4px" width="31" height="35"><path d="M30.5 1 H6 L2 5 V28 L7 33 H30.5" fill="none" stroke="none"/><path d="M30.5 1 H6 L2 5 V28" fill="none" stroke="#9c9c9c" stroke-width="1.2"/><path d="M2 28 L7 33 H30.5" fill="none" stroke="#111" stroke-width="1.5"/></svg>
<div class="t" style="left:318.5px;width:80px;text-align:center;top:297.4px;font-size:16.5px;font-weight:bold;color:#dcdcdc"><span style="display:inline-block;transform:scaleX(0.84);">CA</span></div>
<svg class="a" style="left:343px;top:322.8px" width="31" height="35"><path d="M30.5 1 H6 L2 5 V28 L7 33 H30.5" fill="none" stroke="none"/><path d="M30.5 1 H6 L2 5 V28" fill="none" stroke="#9c9c9c" stroke-width="1.2"/><path d="M2 28 L7 33 H30.5" fill="none" stroke="#111" stroke-width="1.5"/></svg>
<div class="t" style="left:318.5px;width:80px;text-align:center;top:331.8px;font-size:16.5px;font-weight:bold;color:#dcdcdc"><span style="display:inline-block;transform:scaleX(0.84);">AP</span></div>
<svg class="a" style="left:343px;top:357.1px" width="31" height="35"><path d="M30.5 1 H6 L2 5 V28 L7 33 H30.5" fill="none" stroke="none"/><path d="M30.5 1 H6 L2 5 V28" fill="none" stroke="#9c9c9c" stroke-width="1.2"/><path d="M2 28 L7 33 H30.5" fill="none" stroke="#111" stroke-width="1.5"/></svg>
<div class="t" style="left:318.5px;width:80px;text-align:center;top:366.1px;font-size:16.5px;font-weight:bold;color:#dcdcdc"><span style="display:inline-block;transform:scaleX(0.84);">EP</span></div>
<svg class="a" style="left:343px;top:391.5px" width="31" height="35"><path d="M30.5 1 H6 L2 5 V28 L7 33 H30.5" fill="none" stroke="none"/><path d="M30.5 1 H6 L2 5 V28" fill="none" stroke="#9c9c9c" stroke-width="1.2"/><path d="M2 28 L7 33 H30.5" fill="none" stroke="#111" stroke-width="1.5"/></svg>
<div class="t" style="left:318.5px;width:80px;text-align:center;top:400.5px;font-size:16.5px;font-weight:bold;color:#dcdcdc"><span style="display:inline-block;transform:scaleX(0.84);">CD</span></div>
<svg class="a" style="left:343px;top:425.9px" width="31" height="35"><path d="M30.5 1 H6 L2 5 V28 L7 33 H30.5" fill="none" stroke="none"/><path d="M30.5 1 H6 L2 5 V28" fill="none" stroke="#9c9c9c" stroke-width="1.2"/><path d="M2 28 L7 33 H30.5" fill="none" stroke="#111" stroke-width="1.5"/></svg>
<div class="t" style="left:318.5px;width:80px;text-align:center;top:434.9px;font-size:16.5px;font-weight:bold;color:#dcdcdc"><span style="display:inline-block;transform:scaleX(0.84);">VV</span></div>
<svg class="a" style="left:343px;top:460.2px" width="31" height="35"><path d="M30.5 1 H6 L2 5 V28 L7 33 H30.5" fill="none" stroke="none"/><path d="M30.5 1 H6 L2 5 V28" fill="none" stroke="#9c9c9c" stroke-width="1.2"/><path d="M2 28 L7 33 H30.5" fill="none" stroke="#111" stroke-width="1.5"/></svg>
<div class="t" style="left:318.5px;width:80px;text-align:center;top:469.2px;font-size:16.5px;font-weight:bold;color:#dcdcdc"><span style="display:inline-block;transform:scaleX(0.84);font-family:Liberation Mono">I</span></div>
<svg class="a" style="left:343px;top:494.6px" width="31" height="35"><path d="M30.5 1 H6 L2 5 V28 L7 33 H30.5" fill="none" stroke="none"/><path d="M30.5 1 H6 L2 5 V28" fill="none" stroke="#9c9c9c" stroke-width="1.2"/><path d="M2 28 L7 33 H30.5" fill="none" stroke="#111" stroke-width="1.5"/></svg>
<div class="t" style="left:318.5px;width:80px;text-align:center;top:503.6px;font-size:16.5px;font-weight:bold;color:#dcdcdc"><span style="display:inline-block;transform:scaleX(0.84);">P</span></div>
<svg class="a" style="left:343px;top:529.0px" width="31" height="35"><path d="M30.5 1 H6 L2 5 V28 L7 33 H30.5" fill="#7c7c7c" stroke="none"/><path d="M30.5 1 H6 L2 5 V28" fill="none" stroke="#9c9c9c" stroke-width="1.2"/><path d="M2 28 L7 33 H30.5" fill="none" stroke="#111" stroke-width="1.5"/></svg>
<div class="t" style="left:318.5px;width:80px;text-align:center;top:538.0px;font-size:16.5px;font-weight:bold;color:#fafafa"><span style="display:inline-block;transform:scaleX(0.84);">GD</span></div>
<div class="t" style="left:382px;top:269px;font-size:15px;color:#cfcfcf;">msec</div>
<div class="t" style="left:355px;width:60px;text-align:right;top:290.5px;font-size:14px;color:#d4d4d4">24</div>
<div class="t" style="left:355px;width:60px;text-align:right;top:319.1px;font-size:14px;color:#d4d4d4">20</div>
<div class="t" style="left:355px;width:60px;text-align:right;top:347.8px;font-size:14px;color:#d4d4d4">16</div>
<div class="t" style="left:355px;width:60px;text-align:right;top:376.4px;font-size:14px;color:#d4d4d4">12</div>
<div class="t" style="left:355px;width:60px;text-align:right;top:405.0px;font-size:14px;color:#d4d4d4">8</div>
<div class="t" style="left:355px;width:60px;text-align:right;top:433.6px;font-size:14px;color:#d4d4d4">4</div>
<div class="t" style="left:355px;width:60px;text-align:right;top:462.2px;font-size:14px;color:#d4d4d4">0</div>
<div class="t" style="left:355px;width:60px;text-align:right;top:490.9px;font-size:14px;color:#d4d4d4">-4</div>
<div class="t" style="left:355px;width:60px;text-align:right;top:519.5px;font-size:14px;color:#d4d4d4">-8</div>
<div class="t" style="left:418px;top:550px;font-size:14px;color:#d4d4d4;letter-spacing:0.6px">5 Hz</div>
<div class="t" style="left:472px;top:550px;font-size:14px;color:#d4d4d4;letter-spacing:0.6px">10</div>
<div class="t" style="left:597px;top:550px;font-size:14px;color:#d4d4d4;letter-spacing:0.6px">50</div>
<div class="t" style="left:648px;top:550px;font-size:14px;color:#d4d4d4;letter-spacing:0.6px">100</div>
<div class="t" style="left:775px;top:550px;font-size:14px;color:#d4d4d4;letter-spacing:0.6px">500</div>
<div class="t" style="left:833px;top:550px;font-size:14px;color:#d4d4d4;letter-spacing:0.6px">1 K</div>
<div class="t" style="left:960px;top:550px;font-size:14px;color:#d4d4d4;letter-spacing:0.6px">5 K</div>
<div class="t" style="left:1012px;top:550px;font-size:14px;color:#d4d4d4;letter-spacing:0.6px">10 K</div>
<div class="t" style="left:1053px;top:550px;font-size:14px;color:#d4d4d4;letter-spacing:0.6px">20 K</div>
<svg class="a" style="left:420px;top:281px" width="664" height="263">
<rect x="0" y="0" width="664" height="263" fill="#8a8a8a"/>
<path d="M0 0 H664 V2 H2 V263 H0 Z" fill="#3e3e3e"/>
<rect x="3" y="3" width="657" height="256" fill="#000"/>
<line x1="17.44" y1="3" x2="17.44" y2="259" stroke="#575757" stroke-width="1.3"/>
<line x1="29.65" y1="3" x2="29.65" y2="259" stroke="#575757" stroke-width="1.3"/>
<line x1="40.23" y1="3" x2="40.23" y2="259" stroke="#575757" stroke-width="1.3"/>
<line x1="49.56" y1="3" x2="49.56" y2="259" stroke="#575757" stroke-width="1.3"/>
<line x1="57.91" y1="3" x2="57.91" y2="259" stroke="#575757" stroke-width="1.3"/>
<line x1="112.81" y1="3" x2="112.81" y2="259" stroke="#575757" stroke-width="1.3"/>
<line x1="144.93" y1="3" x2="144.93" y2="259" stroke="#575757" stroke-width="1.3"/>
<line x1="167.72" y1="3" x2="167.72" y2="259" stroke="#575757" stroke-width="1.3"/>
<line x1="185.40" y1="3" x2="185.40" y2="259" stroke="#575757" stroke-width="1.3"/>
<line x1="199.84" y1="3" x2="199.84" y2="259" stroke="#575757" stroke-width="1.3"/>
<line x1="212.05" y1="3" x2="212.05" y2="259" stroke="#575757" stroke-width="1.3"/>
<line x1="222.63" y1="3" x2="222.63" y2="259" stroke="#575757" stroke-width="1.3"/>
<line x1="231.96" y1="3" x2="231.96" y2="259" stroke="#575757" stroke-width="1.3"/>
<line x1="240.30" y1="3" x2="240.30" y2="259" stroke="#575757" stroke-width="1.3"/>
<line x1="295.21" y1="3" x2="295.21" y2="259" stroke="#575757" stroke-width="1.3"/>
<line x1="327.33" y1="3" x2="327.33" y2="259" stroke="#575757" stroke-width="1.3"/>
<line x1="350.12" y1="3" x2="350.12" y2="259" stroke="#575757" stroke-width="1.3"/>
<line x1="367.79" y1="3" x2="367.79" y2="259" stroke="#575757" stroke-width="1.3"/>
<line x1="382.23" y1="3" x2="382.23" y2="259" stroke="#575757" stroke-width="1.3"/>
<line x1="394.44" y1="3" x2="394.44" y2="259" stroke="#575757" stroke-width="1.3"/>
<line x1="405.02" y1="3" x2="405.02" y2="259" stroke="#575757" stroke-width="1.3"/>
<line x1="414.35" y1="3" x2="414.35" y2="259" stroke="#575757" stroke-width="1.3"/>
<line x1="422.70" y1="3" x2="422.70" y2="259" stroke="#575757" stroke-width="1.3"/>
<line x1="477.60" y1="3" x2="477.60" y2="259" stroke="#575757" stroke-width="1.3"/>
<line x1="509.72" y1="3" x2="509.72" y2="259" stroke="#575757" stroke-width="1.3"/>
<line x1="532.51" y1="3" x2="532.51" y2="259" stroke="#575757" stroke-width="1.3"/>
<line x1="550.19" y1="3" x2="550.19" y2="259" stroke="#575757" stroke-width="1.3"/>
<line x1="564.63" y1="3" x2="564.63" y2="259" stroke="#575757" stroke-width="1.3"/>
<line x1="576.84" y1="3" x2="576.84" y2="259" stroke="#575757" stroke-width="1.3"/>
<line x1="587.42" y1="3" x2="587.42" y2="259" stroke="#575757" stroke-width="1.3"/>
<line x1="596.75" y1="3" x2="596.75" y2="259" stroke="#575757" stroke-width="1.3"/>
<line x1="605.09" y1="3" x2="605.09" y2="259" stroke="#575757" stroke-width="1.3"/>
<line x1="3" y1="16.50" x2="660" y2="16.50" stroke="#575757" stroke-width="1.3"/>
<line x1="3" y1="30.81" x2="660" y2="30.81" stroke="#575757" stroke-width="1.3"/>
<line x1="3" y1="45.12" x2="660" y2="45.12" stroke="#575757" stroke-width="1.3"/>
<line x1="3" y1="59.44" x2="660" y2="59.44" stroke="#575757" stroke-width="1.3"/>
<line x1="3" y1="73.75" x2="660" y2="73.75" stroke="#575757" stroke-width="1.3"/>
<line x1="3" y1="88.06" x2="660" y2="88.06" stroke="#575757" stroke-width="1.3"/>
<line x1="3" y1="102.38" x2="660" y2="102.38" stroke="#575757" stroke-width="1.3"/>
<line x1="3" y1="116.69" x2="660" y2="116.69" stroke="#575757" stroke-width="1.3"/>
<line x1="3" y1="131.00" x2="660" y2="131.00" stroke="#575757" stroke-width="1.3"/>
<line x1="3" y1="145.31" x2="660" y2="145.31" stroke="#575757" stroke-width="1.3"/>
<line x1="3" y1="159.62" x2="660" y2="159.62" stroke="#575757" stroke-width="1.3"/>
<line x1="3" y1="173.94" x2="660" y2="173.94" stroke="#575757" stroke-width="1.3"/>
<line x1="3" y1="188.25" x2="660" y2="188.25" stroke="#575757" stroke-width="1.3"/>
<line x1="3" y1="202.56" x2="660" y2="202.56" stroke="#575757" stroke-width="1.3"/>
<line x1="3" y1="216.88" x2="660" y2="216.88" stroke="#575757" stroke-width="1.3"/>
<line x1="3" y1="231.19" x2="660" y2="231.19" stroke="#575757" stroke-width="1.3"/>
<line x1="3" y1="245.50" x2="660" y2="245.50" stroke="#575757" stroke-width="1.3"/>
<path d="M3.00,206.20 C5.00,205.47 11.33,203.07 15.00,201.80 C18.67,200.53 21.17,199.93 25.00,198.60 C28.83,197.27 33.83,195.80 38.00,193.80 C42.17,191.80 45.67,189.37 50.00,186.60 C54.33,183.83 59.53,180.57 64.00,177.20 C68.47,173.83 72.97,169.80 76.80,166.40 C80.63,163.00 83.63,160.43 87.00,156.80 C90.37,153.17 93.83,148.47 97.00,144.60 C100.17,140.73 103.07,137.27 106.00,133.60 C108.93,129.93 112.10,125.60 114.60,122.60 C117.10,119.60 119.02,117.47 121.00,115.60 C122.98,113.73 124.58,112.40 126.50,111.40 C128.42,110.40 130.50,109.63 132.50,109.60 C134.50,109.57 136.42,109.87 138.50,111.20 C140.58,112.53 142.83,115.13 145.00,117.60 C147.17,120.07 149.38,123.10 151.50,126.00 C153.62,128.90 155.62,132.03 157.70,135.00 C159.78,137.97 161.87,141.20 164.00,143.80 C166.13,146.40 168.33,148.67 170.50,150.60 C172.67,152.53 174.83,154.03 177.00,155.40 C179.17,156.77 181.33,157.93 183.50,158.80 C185.67,159.67 187.75,160.23 190.00,160.60 C192.25,160.97 194.83,161.10 197.00,161.00 C199.17,160.90 200.83,160.73 203.00,160.00 C205.17,159.27 207.83,157.93 210.00,156.60 C212.17,155.27 214.17,153.57 216.00,152.00 C217.83,150.43 219.42,148.80 221.00,147.20 C222.58,145.60 224.08,143.80 225.50,142.40 C226.92,141.00 228.22,139.67 229.50,138.80 C230.78,137.93 231.95,137.20 233.20,137.20 C234.45,137.20 235.70,137.63 237.00,138.80 C238.30,139.97 239.58,142.10 241.00,144.20 C242.42,146.30 244.00,149.00 245.50,151.40 C247.00,153.80 248.42,156.23 250.00,158.60 C251.58,160.97 253.17,163.30 255.00,165.60 C256.83,167.90 258.83,170.37 261.00,172.40 C263.17,174.43 265.58,176.33 268.00,177.80 C270.42,179.27 273.00,180.30 275.50,181.20 C278.00,182.10 280.25,182.67 283.00,183.20 C285.75,183.73 288.33,184.00 292.00,184.40 C295.67,184.80 299.50,185.20 305.00,185.60 C310.50,186.00 317.50,186.47 325.00,186.80 C332.50,187.13 340.83,187.40 350.00,187.60 C359.17,187.80 366.67,187.92 380.00,188.00 C393.33,188.08 421.67,188.08 430.00,188.10 L660,188.1" fill="none" stroke="#f28a1e" stroke-width="2.5" stroke-linejoin="round" stroke-linecap="round"/>
</svg>
</div></body></html>
